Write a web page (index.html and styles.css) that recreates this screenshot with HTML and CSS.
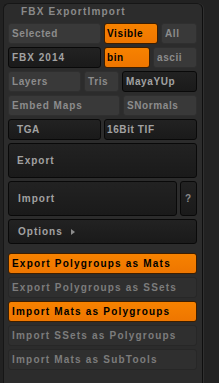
FILE: index.html
```html
<!DOCTYPE html>
<html>
<head>
<meta charset="utf-8">
<link rel="stylesheet" href="styles.css">
</head>
<body>
<div class="panel">
  <div class="title">FBX ExportImport</div>
  <div class="group">
    <div class="row">
      <div class="btn w93">Selected</div>
      <div class="btn on w54 tight">Visible</div>
      <div class="btn fill">All</div>
    </div>
    <div class="row">
      <div class="btn dark w93 mono">FBX 2014</div>
      <div class="btn on w46 tight">bin</div>
      <div class="btn fill">ascii</div>
    </div>
    <div class="row">
      <div class="btn w73">Layers</div>
      <div class="btn w35">Tris</div>
      <div class="btn dark fill">MayaYUp</div>
    </div>
    <div class="row">
      <div class="btn w112 spread">Embed Maps</div>
      <div class="btn fill">SNormals</div>
    </div>
    <div class="row">
      <div class="btn dark w93 pad9">TGA</div>
      <div class="btn dark fill tight">16Bit TIF</div>
    </div>
    <div class="row">
      <div class="btn dark fill tall pad9 wide">Export</div>
    </div>
    <div class="row">
      <div class="btn dark fill tall pad10 wide">Import</div>
      <div class="btn dark w17 tall q">?</div>
    </div>
    <div class="row">
      <div class="btn dark fill mid pad10 wide">Options<span class="tri"></span></div>
    </div>
  </div>
  <div class="group list">
    <div class="btn on item-on">Export Polygroups as Mats</div>
    <div class="btn item">Export Polygroups as SSets</div>
    <div class="btn on item-on">Import Mats as Polygroups</div>
    <div class="btn item">Import SSets as Polygroups</div>
    <div class="btn item">Import Mats as SubTools</div>
  </div>
</div>
</body>
</html>
```

FILE: styles.css
```css
html, body {
  margin: 0;
  padding: 0;
}
body {
  background: #222222;
  width: 219px;
  height: 383px;
  overflow: hidden;
  font-family: "Liberation Sans", Arial, sans-serif;
  font-weight: bold;
  font-size: 10px;
}
.panel {
  margin: 3px 0 0 3px;
  width: 200px;
  height: 380px;
  box-sizing: border-box;
  background: #2c2c2c;
  border: 1px solid #161616;
  border-bottom: none;
  border-right-color: #0e0e0e;
  border-radius: 6px 6px 0 0;
  padding: 0 5px 0 4px;
  box-shadow: 1px 0 0 #303030;
}
.title {
  height: 16px;
  line-height: 16px;
  padding-left: 13px;
  color: #8a8a8a;
  letter-spacing: 1.2px;
}
.group {
  margin-top: 3px;
  display: flex;
  flex-direction: column;
  gap: 3px;
}
.group.list {
  margin-top: 9px;
}
.row {
  display: flex;
  gap: 3px;
}
.btn {
  box-sizing: border-box;
  height: 21px;
  line-height: 19px;
  border: 1px solid #2f2f2f;
  border-radius: 3px;
  background: #393939;
  color: #8c8c8c;
  padding-left: 3px;
  letter-spacing: 0.6px;
  white-space: nowrap;
  overflow: hidden;
}
.fill { flex: 1; }
.w93 { width: 93px; }
.w54 { width: 54px; }
.w46 { width: 46px; }
.w73 { width: 73px; }
.w35 { width: 35px; }
.w112 { width: 112px; }
.w17 { width: 17px; }
.dark {
  background: linear-gradient(#222222, #1a1a1a);
  border-color: #090909;
  color: #a2a2a2;
}
.on {
  background: linear-gradient(#f78200, #ee7600);
  border-color: #3c1e00;
  color: #000000;
}
.tight { padding-left: 2px; }
.mono { letter-spacing: 1px; }
.spread { letter-spacing: 0.9px; }
.pad9 { padding-left: 8px; }
.pad10 { padding-left: 9px; }
.wide { letter-spacing: 1px; }
.tall {
  height: 35px;
  line-height: 33px;
}
.mid {
  height: 25px;
  line-height: 23px;
}
.q { padding-left: 4px; color: #8a8a8a; }
.tri {
  display: inline-block;
  width: 0;
  height: 0;
  border-top: 3px solid transparent;
  border-bottom: 3px solid transparent;
  border-left: 4px solid #8c8c8c;
  margin-left: 8px;
}
.item, .item-on {
  letter-spacing: 1.2px;
}
.item {
  background: #2f2f2f;
  border-color: #272727;
  color: #7c7c7c;
}
```
